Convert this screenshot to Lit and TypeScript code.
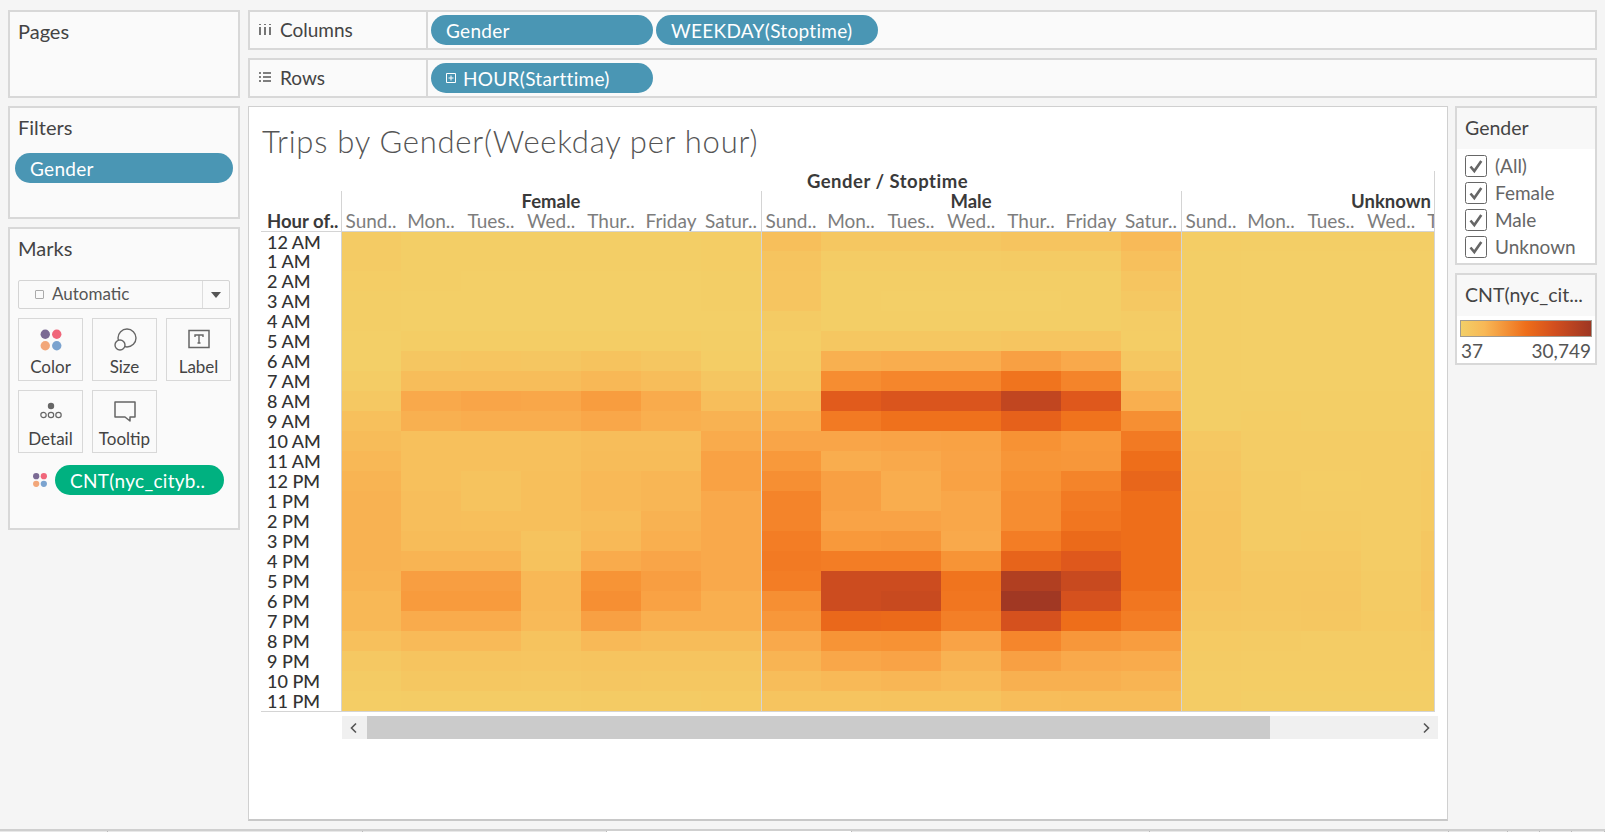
import { LitElement, css, html, svg } from "lit";
import { customElement } from "lit/decorators.js";

// colour ramp of the legend, value 0..100
const RAMP = [
    [243, 207, 103], [246, 196, 95], [248, 184, 86], [249, 165, 72], [247, 148, 54],
    [243, 125, 37], [238, 110, 26], [224, 89, 28], [210, 79, 30], [189, 68, 32], [158, 55, 35],
];

function heat(v: number) {
    const i = Math.min(Math.floor(v / 10), 9);
    const t = v / 10 - i;
    const c = RAMP[i].map((a, k) => Math.round(a + (RAMP[i + 1][k] - a) * t));
    return `rgb(${c.join(",")})`;
}

const HOURS = [
    "12 AM", "1 AM", "2 AM", "3 AM", "4 AM", "5 AM", "6 AM", "7 AM", "8 AM", "9 AM", "10 AM", "11 AM",
    "12 PM", "1 PM", "2 PM", "3 PM", "4 PM", "5 PM", "6 PM", "7 PM", "8 PM", "9 PM", "10 PM", "11 PM",
];
const DAYS = ["Sund..", "Mon..", "Tues..", "Wed..", "Thur..", "Friday", "Satur.."];

const FEMALE = [
    [4, 1, 1, 1, 1, 1, 2], [4, 1, 1, 1, 1, 1, 2], [2, 1, 0, 0, 0, 0, 1], [1, 0, 0, 0, 0, 0, 1],
    [1, 0, 0, 0, 0, 0, 0], [0, 2, 2, 2, 2, 2, 1], [0, 8, 9, 8, 11, 8, 2], [3, 16, 16, 16, 20, 16, 8],
    [6, 28, 30, 29, 35, 27, 15], [13, 24, 26, 26, 29, 25, 23], [17, 13, 13, 13, 16, 16, 27], [20, 13, 13, 13, 17, 17, 32],
    [22, 13, 11, 14, 19, 21, 32], [23, 15, 11, 14, 19, 21, 28], [23, 15, 14, 14, 17, 23, 28], [23, 17, 17, 11, 19, 25, 28],
    [23, 22, 22, 12, 27, 30, 28], [22, 34, 34, 20, 40, 34, 28], [20, 36, 36, 20, 42, 32, 25], [20, 27, 27, 18, 33, 25, 25],
    [13, 18, 18, 11, 19, 17, 17], [6, 10, 10, 9, 10, 10, 10], [4, 7, 7, 6, 8, 7, 7], [2, 3, 3, 3, 4, 4, 5],
];
const MALE = [
    [14, 7, 7, 7, 10, 10, 18], [10, 3, 3, 3, 4, 4, 13], [9, 1, 1, 1, 1, 1, 9], [9, 1, 0, 0, 0, 1, 6],
    [4, 1, 1, 1, 1, 1, 3], [2, 7, 7, 7, 9, 9, 2], [4, 24, 26, 26, 33, 28, 7], [7, 43, 46, 46, 56, 47, 16],
    [17, 69, 74, 74, 88, 71, 25], [25, 52, 58, 58, 66, 57, 42], [30, 30, 31, 32, 41, 37, 52], [37, 26, 28, 31, 39, 38, 60],
    [42, 33, 26, 32, 41, 47, 64], [47, 33, 26, 29, 43, 52, 60], [47, 31, 31, 29, 43, 55, 60], [50, 37, 38, 28, 50, 62, 60],
    [52, 50, 50, 40, 65, 71, 60], [50, 83, 83, 56, 94, 85, 60], [42, 83, 85, 55, 99, 78, 55], [38, 63, 62, 49, 78, 60, 50],
    [28, 40, 41, 31, 46, 38, 35], [22, 29, 31, 23, 33, 28, 27], [16, 19, 21, 18, 24, 24, 22], [10, 10, 11, 11, 16, 17, 17],
];
// only five of the seven days are scrolled into view
const UNKNOWN = [
    [2, 1, 1, 1, 1], [1, 0, 0, 0, 0], [1, 0, 0, 0, 0], [1, 0, 0, 0, 0], [1, 0, 0, 0, 0], [1, 0, 0, 0, 0],
    [1, 0, 0, 0, 0], [1, 0, 0, 0, 0], [1, 1, 1, 1, 1], [1, 2, 1, 1, 1], [6, 3, 3, 3, 3], [8, 3, 3, 3, 4],
    [9, 4, 2, 3, 5], [10, 4, 3, 3, 5], [11, 4, 4, 3, 5], [11, 4, 5, 3, 7], [11, 6, 6, 3, 7], [11, 7, 7, 4, 9],
    [9, 7, 8, 4, 9], [7, 6, 7, 5, 6], [5, 4, 3, 3, 4], [4, 3, 3, 3, 3], [3, 2, 2, 2, 2], [3, 1, 1, 1, 1],
];

const TABS = [108, 255, 244, 245, 298, 299, 59, 32, 32, 33];

const dots = (r: number) => svg`
    <circle cx="6" cy="6" r=${r} fill="#7b6a94"></circle>
    <circle cx="17" cy="6" r=${r} fill="#f0667a"></circle>
    <circle cx="6" cy="17" r=${r} fill="#f2a77a"></circle>
    <circle cx="17" cy="17" r=${r} fill="#7ba3cf"></circle>`;

const check = html`<svg class="check" viewBox="0 0 22 22">
    <rect x="0.5" y="0.5" width="21" height="21" rx="2" fill="#fff" stroke="#666"></rect>
    <path d="M5.5 11.5l3.8 4.5 7-10" fill="none" stroke="#666" stroke-width="2.6"></path>
</svg>`;

@customElement("app-root")
export class AppRoot extends LitElement {
    static styles = css`
        :host {
            display: block;
            width: 1605px;
            height: 832px;
            overflow: hidden;
            background: #f5f5f5;
            font-family: "Lato", "Liberation Sans", sans-serif;
            font-size: 19px;
            color: #444;
        }
        .page {
            display: grid;
            grid-template-columns: 232px 1349px;
            column-gap: 8px;
            height: 819px;
            padding: 10px 8px 0;
        }
        .left,
        .right {
            display: flex;
            flex-direction: column;
            gap: 8px;
        }
        .panel {
            box-sizing: border-box;
            border: 2px solid #d8d8d8;
            background: #fafafa;
        }
        .panel-title {
            padding: 6px 0 0 8px;
            line-height: 26px;
            font-size: 20px;
        }
        .pages {
            height: 88px;
        }
        .filters {
            height: 113px;
        }
        .marks {
            height: 303px;
        }
        .pill {
            box-sizing: border-box;
            display: flex;
            align-items: center;
            height: 30px;
            border-radius: 15px;
            background: #4a96b4;
            color: #fff;
            font-size: 19px;
            letter-spacing: 0.3px;
            white-space: nowrap;
            padding-left: 15px;
        }
        .pill.wide {
            width: 222px;
        }
        .filters .pill {
            width: 218px;
            margin: 13px 0 0 5px;
        }
        .shelf {
            box-sizing: border-box;
            display: flex;
            height: 40px;
            border: 2px solid #d8d8d8;
            background: #fafafa;
        }
        .shelf-name {
            box-sizing: border-box;
            display: flex;
            align-items: center;
            gap: 8px;
            width: 178px;
            padding: 0 0 2px 8px;
            border-right: 2px solid #d8d8d8;
            font-size: 19px;
        }
        .shelf-name svg {
            width: 14px;
            height: 14px;
        }
        .shelf-pills {
            display: flex;
            gap: 3px;
            padding: 3px 0 0 3px;
        }
        .plus {
            width: 10px;
            height: 10px;
            margin-right: 7px;
        }
        .work {
            display: flex;
            gap: 7px;
        }
        .canvas {
            box-sizing: border-box;
            width: 1200px;
            height: 715px;
            border: 1px solid #d0d0d0;
            border-bottom: 2px solid #c8c8c8;
            background: #fff;
        }
        .title {
            height: 64px;
            padding-left: 13px;
            font-size: 31px;
            font-weight: 300;
            letter-spacing: 0.75px;
            line-height: 68px;
            color: #555;
        }
        .viz {
            display: flex;
            margin-left: 12px;
        }
        .labels {
            width: 80px;
            flex: none;
        }
        .corner {
            box-sizing: border-box;
            display: flex;
            align-items: flex-end;
            height: 61px;
            padding-left: 6px;
            border-bottom: 1px solid #d4d4d4;
            font-weight: 700;
            font-size: 18.5px;
            white-space: nowrap;
            line-height: 19px;
            color: #3a3a3a;
        }
        .hours {
            display: grid;
            grid-template-rows: 19px repeat(23, 20px);
            border-bottom: 1px solid #d4d4d4;
        }
        .hours div {
            padding-left: 6px;
            font-size: 18px;
            font-weight: 500;
            line-height: 20px;
            color: #333;
        }
        .scroller {
            width: 1093px;
            overflow: hidden;
            border-right: 1px solid #d4d4d4;
        }
        .track {
            width: 1260px;
        }
        .super {
            width: 1093px;
            height: 20px;
            line-height: 21px;
            text-align: center;
            font-size: 18.5px;
            font-weight: 700;
            letter-spacing: 0.5px;
            color: #3a3a3a;
        }
        .groups {
            box-sizing: border-box;
            display: grid;
            grid-template-columns: repeat(3, 420px);
            height: 41px;
            border-bottom: 1px solid #d4d4d4;
        }
        .group {
            box-shadow: inset 1px 0 0 #d4d4d4;
        }
        .group-name {
            height: 20px;
            line-height: 21px;
            text-align: center;
            font-size: 18.5px;
            font-weight: 700;
            color: #3a3a3a;
        }
        .days {
            display: grid;
            grid-template-columns: repeat(7, 60px);
            height: 20px;
            line-height: 20px;
        }
        .days div {
            text-align: center;
            white-space: nowrap;
            font-size: 19px;
            color: #7d7d7d;
        }
        .heat {
            display: grid;
            grid-template-columns: repeat(19, 60px);
            grid-template-rows: 19px repeat(23, 20px);
            border-bottom: 1px solid #d4d4d4;
        }
        .sep {
            box-shadow: inset 1px 0 0 #d4d4d4;
        }
        .scrollbar {
            box-sizing: border-box;
            display: flex;
            align-items: center;
            width: 1096px;
            height: 23px;
            margin: 4px 0 0 93px;
            background: #f0f0f0;
        }
        .thumb {
            width: 903px;
            height: 23px;
            background: #cbcbcb;
        }
        .scrollbar svg {
            flex: none;
            width: 25px;
            height: 12px;
        }
        .arrow-r {
            margin-left: auto;
        }
        .side {
            display: flex;
            flex-direction: column;
            gap: 8px;
            width: 142px;
        }
        .card-title {
            padding: 7px 0 0 8px;
            height: 34px;
            line-height: 26px;
            font-size: 19.5px;
            white-space: nowrap;
            background: #f8f8f8;
        }
        .legend-gender {
            box-sizing: border-box;
            height: 159px;
            border: 2px solid #d8d8d8;
            background: #fff;
        }
        .checks {
            display: grid;
            grid-auto-rows: 27px;
            padding: 3px 0 0 8px;
        }
        .checks label {
            display: flex;
            align-items: center;
            gap: 8px;
            color: #666;
        }
        .check {
            flex: none;
            width: 22px;
            height: 22px;
        }
        .legend-count {
            box-sizing: border-box;
            height: 92px;
            border: 2px solid #d8d8d8;
            background: #fff;
        }
        .bar {
            box-sizing: border-box;
            height: 17px;
            margin: 4px 3px 0 3px;
            border: 1px solid #a09a90;
            background: linear-gradient(90deg, #f3cf67, #f8b856 18%, #ee6e1a 50%, #d24f1e 72%, #9e3723);
        }
        .range {
            display: flex;
            justify-content: space-between;
            padding: 3px 4px 0 4px;
            line-height: 22px;
            color: #555;
        }
        .select {
            box-sizing: border-box;
            display: flex;
            align-items: center;
            height: 29px;
            margin: 19px 8px 0 8px;
            border: 1px solid #d4d4d4;
            border-radius: 2px;
            font-size: 17px;
            color: #555;
        }
        .select .grow {
            flex: 1;
            padding-bottom: 2px;
        }
        .select .sq {
            width: 7px;
            height: 7px;
            margin: 0 8px 0 16px;
            border: 1px solid #aaa;
            border-radius: 1px;
        }
        .select .drop {
            display: flex;
            align-items: center;
            justify-content: center;
            width: 26px;
            height: 27px;
            border-left: 1px solid #ddd;
        }
        .tri {
            width: 0;
            height: 0;
            border: 5px solid transparent;
            border-top: 6px solid #555;
            border-bottom: 0;
        }
        .tiles {
            display: grid;
            grid-template-columns: repeat(3, 65px);
            grid-auto-rows: 63px;
            column-gap: 9px;
            row-gap: 9px;
            margin: 9px 0 0 8px;
        }
        .tile {
            box-sizing: border-box;
            display: flex;
            flex-direction: column;
            align-items: center;
            border: 1px solid #d8d8d8;
            font-size: 17px;
            color: #444;
        }
        .tile svg {
            width: 24px;
            height: 24px;
            margin: 9px 0 6px;
        }
        .tile span {
            line-height: 18px;
        }
        .count-row {
            display: flex;
            align-items: center;
            gap: 7px;
            margin: 12px 0 0 22px;
        }
        .count-row svg {
            width: 16px;
            height: 16px;
        }
        .count-row .pill {
            width: 169px;
            background: #00b180;
        }
        .tabs {
            display: flex;
            height: 3px;
            border-top: 2px solid #cfcfcf;
            background: #e8e8e8;
        }
        .tabs div {
            box-sizing: border-box;
            flex: none;
            border-right: 1px solid #bbb;
        }
        .tabs .on {
            background: #fff;
        }
    `;

    private cells(data: number[][], r: number) {
        return data[r].map(
            (v, c) => html`<div class=${c === 0 ? "sep" : ""} style="background-color:${heat(v)}"></div>`,
        );
    }

    private group(name: string, days: string[]) {
        return html`<div class="group">
            <div class="group-name">${name}</div>
            <div class="days">${days.map((d) => html`<div>${d}</div>`)}</div>
        </div>`;
    }

    private renderChart() {
        return html`<div class="viz">
                <div class="labels">
                    <div class="corner">Hour of..</div>
                    <div class="hours">${HOURS.map((h) => html`<div>${h}</div>`)}</div>
                </div>
                <div class="scroller">
                    <div class="track">
                        <div class="super">Gender / Stoptime</div>
                        <div class="groups">
                            ${this.group("Female", DAYS)}${this.group("Male", DAYS)}${this.group("Unknown", DAYS.slice(0, 5))}
                        </div>
                        <div class="heat">
                            ${HOURS.map((_, r) => [this.cells(FEMALE, r), this.cells(MALE, r), this.cells(UNKNOWN, r)])}
                        </div>
                    </div>
                </div>
            </div>
            <div class="scrollbar">
                <svg viewBox="0 0 25 12"><path d="M14 1.5L9.5 6l4.5 4.5" fill="none" stroke="#555" stroke-width="1.6"></path></svg>
                <div class="thumb"></div>
                <svg class="arrow-r" viewBox="0 0 25 12"><path d="M11 1.5L15.5 6 11 10.5" fill="none" stroke="#555" stroke-width="1.6"></path></svg>
            </div>`;
    }

    render() {
        return html`<div class="page">
                <div class="left">
                    <div class="panel pages"><div class="panel-title">Pages</div></div>
                    <div class="panel filters">
                        <div class="panel-title">Filters</div>
                        <div class="pill">Gender</div>
                    </div>
                    <div class="panel marks">
                        <div class="panel-title">Marks</div>
                        <div class="select">
                            <div class="sq"></div>
                            <div class="grow">Automatic</div>
                            <div class="drop"><div class="tri"></div></div>
                        </div>
                        <div class="tiles">
                            <div class="tile">
                                <svg viewBox="0 0 23 23">${dots(4.5)}</svg>
                                <span>Color</span>
                            </div>
                            <div class="tile">
                                <svg viewBox="0 0 24 24">
                                    <circle cx="14" cy="10" r="9" fill="none" stroke="#666" stroke-width="1.4"></circle>
                                    <circle cx="7" cy="17" r="5" fill="#fafafa" stroke="#666" stroke-width="1.4"></circle>
                                </svg>
                                <span>Size</span>
                            </div>
                            <div class="tile">
                                <svg viewBox="0 0 24 24">
                                    <rect x="2" y="2.5" width="20" height="17" fill="none" stroke="#666" stroke-width="1.5"></rect>
                                    <path d="M8 9V7h8v2M12 7v8M10.5 15h3" fill="none" stroke="#666" stroke-width="1.4"></path>
                                </svg>
                                <span>Label</span>
                            </div>
                            <div class="tile">
                                <svg viewBox="0 0 24 24">
                                    <circle cx="12" cy="6" r="3.2" fill="#666"></circle>
                                    <circle cx="4.5" cy="15" r="2.7" fill="none" stroke="#666" stroke-width="1.2"></circle>
                                    <circle cx="12" cy="15" r="2.7" fill="none" stroke="#666" stroke-width="1.2"></circle>
                                    <circle cx="19.5" cy="15" r="2.7" fill="none" stroke="#666" stroke-width="1.2"></circle>
                                </svg>
                                <span>Detail</span>
                            </div>
                            <div class="tile">
                                <svg viewBox="0 0 24 24">
                                    <path d="M2 2h20v15h-5v4l-5-4H2z" fill="none" stroke="#666" stroke-width="1.5" stroke-linejoin="round"></path>
                                </svg>
                                <span>Tooltip</span>
                            </div>
                        </div>
                        <div class="count-row">
                            <svg viewBox="0 0 23 23">${dots(4.5)}</svg>
                            <div class="pill">CNT(nyc_cityb..</div>
                        </div>
                    </div>
                </div>
                <div class="right">
                    <div class="shelf">
                        <div class="shelf-name">
                            <svg viewBox="0 0 14 14"><path d="M2 2v1M7 2v1M12 2v1M2 5v8M7 5v8M12 5v8" stroke="#555" stroke-width="1.6"></path></svg>
                            Columns
                        </div>
                        <div class="shelf-pills">
                            <div class="pill wide">Gender</div>
                            <div class="pill wide">WEEKDAY(Stoptime)</div>
                        </div>
                    </div>
                    <div class="shelf">
                        <div class="shelf-name">
                            <svg viewBox="0 0 14 14"><path d="M1 3h2M1 7h2M1 11h2M5 3h8M5 7h8M5 11h8" stroke="#555" stroke-width="1.6"></path></svg>
                            Rows
                        </div>
                        <div class="shelf-pills">
                            <div class="pill wide">
                                <svg class="plus" viewBox="0 0 10 10"><path d="M.5.5h9v9h-9zM5 2.5v5M2.5 5h5" fill="none" stroke="#fff"></path></svg>
                                HOUR(Starttime)
                            </div>
                        </div>
                    </div>
                    <div class="work">
                        <div class="canvas">
                            <div class="title">Trips by Gender(Weekday per hour)</div>
                            ${this.renderChart()}
                        </div>
                        <div class="side">
                            <div class="legend-gender">
                                <div class="card-title">Gender</div>
                                <div class="checks">
                                    ${["(All)", "Female", "Male", "Unknown"].map((n) => html`<label>${check}${n}</label>`)}
                                </div>
                            </div>
                            <div class="legend-count">
                                <div class="card-title">CNT(nyc_cit...</div>
                                <div class="bar"></div>
                                <div class="range"><span>37</span><span>30,749</span></div>
                            </div>
                        </div>
                    </div>
                </div>
            </div>
            <div class="tabs">
                ${TABS.map((w, i) => html`<div class=${i === 3 ? "on" : ""} style="width:${w}px"></div>`)}
            </div>`;
    }
}

declare global {
    interface HTMLElementTagNameMap {
        "app-root": AppRoot;
    }
}
